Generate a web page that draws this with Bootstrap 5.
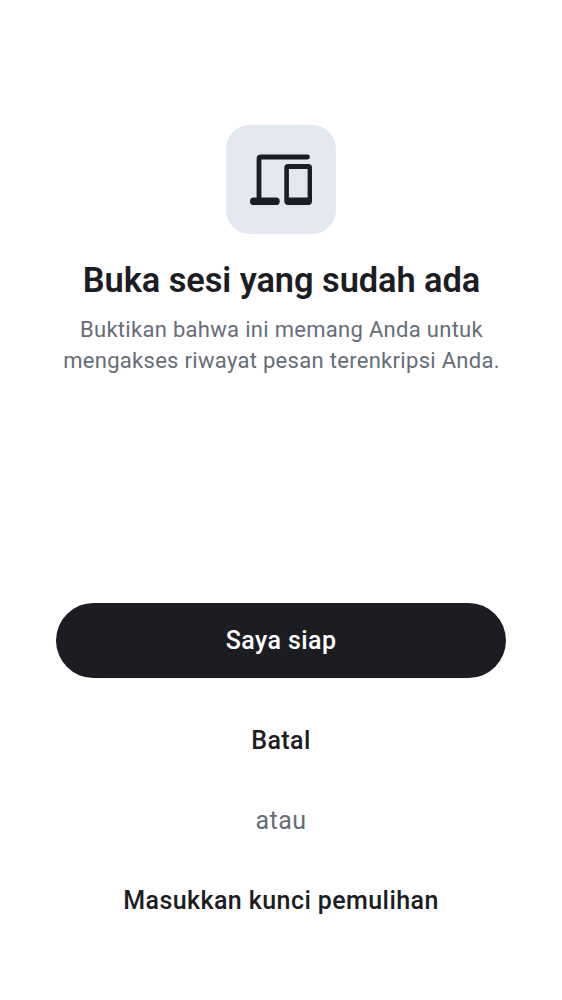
<!DOCTYPE html>
<html lang="id">
<head>
<meta charset="utf-8">
<meta name="viewport" content="width=device-width, initial-scale=1">
<title>Buka sesi yang sudah ada</title>
<link href="https://cdn.jsdelivr.net/npm/bootstrap@5.3.0/dist/css/bootstrap.min.css" rel="stylesheet">
<style>
:root { --ink: #1b1d22; --muted: #656d77; --tile: #e3e8f0; }
body { font-family: Roboto, "Liberation Sans", sans-serif; color: var(--ink); background: #fff; }
.screen { height: 1000px; padding: 125px 56px 62px; }
.hero-tile { width: 110px; height: 109px; border-radius: 24px; background: var(--tile); }
.title { font-size: 34.4px; line-height: 44px; font-weight: 600; letter-spacing: -.06px; margin-top: 24px; padding-left: 1px; }
.subtitle { font-size: 22px; line-height: 31.25px; letter-spacing: .3px; color: var(--muted); margin-top: 12px; padding-left: 1px; }
.action { height: 75px; font-size: 25px; line-height: 37px; font-weight: 500; letter-spacing: .42px; border: 0; color: var(--ink); }
.action-main, .action-main:hover { background: var(--ink); color: #fff; margin-bottom: 25px; }
.or-label { font-size: 25px; line-height: 30px; letter-spacing: .4px; color: var(--muted); margin: 28px 0 27px; }
</style>
</head>
<body>
<main class="screen d-flex flex-column justify-content-between">
  <header class="d-flex flex-column align-items-center text-center">
    <div class="hero-tile d-flex align-items-center justify-content-center">
      <svg width="110" height="109" viewBox="0 0 110 109" fill="#1b1d22" aria-hidden="true">
        <path d="M81.500 32H35Q33 32 33 34V74" fill="none" stroke="#1b1d22" stroke-width="4.800" stroke-linecap="round" stroke-linejoin="round"/>
        <rect x="24" y="72.600" width="29.700" height="7.400" rx="3.600"/>
        <path fill-rule="evenodd" d="M62 39H82.300Q86 39 86 42.700V76.300Q86 80 82.300 80H62Q58.300 80 58.300 76.300V42.700Q58.300 39 62 39ZM62.900 44V72.600H81.600V44Z"/>
      </svg>
    </div>
    <h1 class="title mb-0 text-nowrap">Buka sesi yang sudah ada</h1>
    <p class="subtitle mb-0 text-nowrap">Buktikan bahwa ini memang Anda untuk<br>mengakses riwayat pesan terenkripsi Anda.</p>
  </header>
  <div class="d-flex flex-column">
    <button type="button" class="btn rounded-pill action action-main">Saya siap</button>
    <button type="button" class="btn rounded-pill action">Batal</button>
    <div class="or-label text-center">atau</div>
    <button type="button" class="btn rounded-pill action">Masukkan kunci pemulihan</button>
  </div>
</main>
<script src="https://cdn.jsdelivr.net/npm/bootstrap@5.3.0/dist/js/bootstrap.bundle.min.js"></script>
</body>
</html>
